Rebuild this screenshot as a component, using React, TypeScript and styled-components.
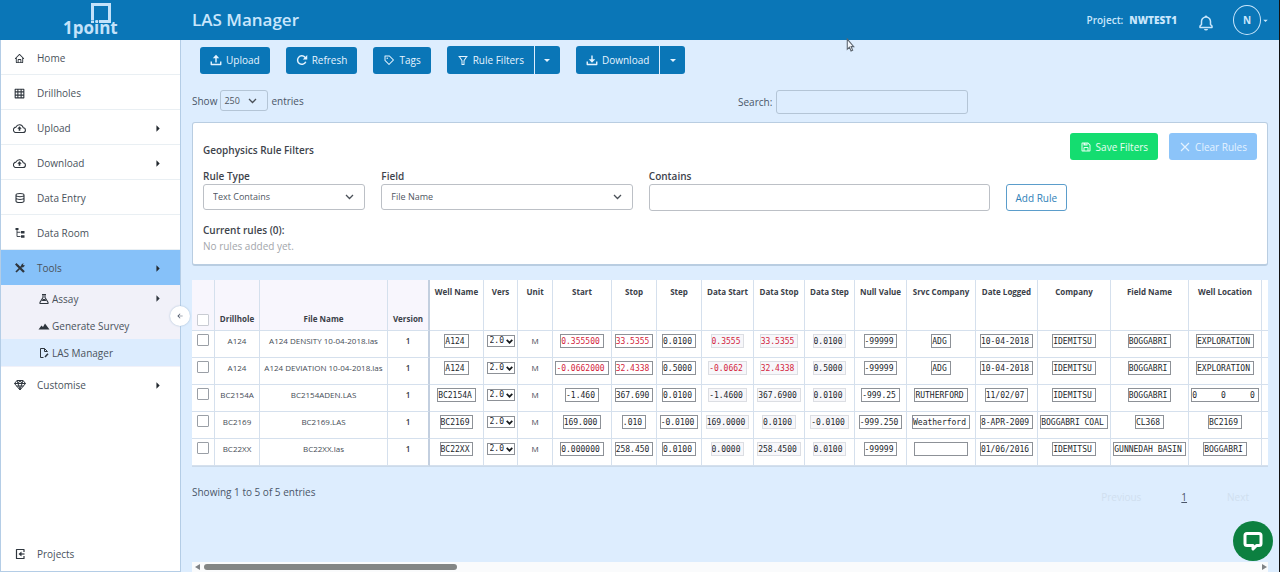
import React from "react";
import styled, { createGlobalStyle, css } from "styled-components";
import { RiGridLine, RiFilterLine, RiArrowLeftLine, RiArrowRightSFill, RiArrowDownSFill } from "react-icons/ri";
import { BiHome, BiBell, BiSave, BiPurchaseTag } from "react-icons/bi";

const SANS = `"Open Sans", "Noto Sans", sans-serif`;
const MONO = `"DejaVu Sans Mono", monospace`;
const BLUE = "#0a76b7";

const GlobalStyle = createGlobalStyle`
  *, *::before, *::after { box-sizing: border-box; }
  body {
    margin: 0;
    background: #ddedfe;
    color: #4a5568;
    font: 10px/16px ${SANS};
  }
  button, input, select { font: inherit; color: inherit; margin: 0; }
  button { cursor: pointer; }
  a { color: inherit; text-decoration: none; }
  h1, h2, p, ul { margin: 0; padding: 0; font-size: inherit; }
  ul { list-style: none; }
`;

const Page = styled.div`
  position: relative;
  display: flex;
  flex-direction: column;
  min-height: 100vh;
  border-right: 1px solid #111;
`;

const Header = styled.header`
  display: flex;
  align-items: center;
  height: 40px;
  background: ${BLUE};
  color: #c9e6fc;
`;

const Brand = styled.a`
  display: flex;
  justify-content: center;
  width: 181px;
`;

const Title = styled.h1`
  flex: 1;
  padding-left: 11px;
  font-size: 17px;
  line-height: 24px;
  font-weight: 600;
`;

const Project = styled.p`
  display: flex;
  gap: 6px;
  font-weight: 600;
`;

const Bell = styled.button`
  display: flex;
  margin: 5px 18px 0 20px;
  padding: 0;
  border: 0;
  background: none;
  font-size: 18px;
`;

const Account = styled.button`
  display: flex;
  align-items: center;
  margin-right: 9px;
  padding: 0;
  border: 0;
  background: none;
  font-weight: 700;
`;

const Avatar = styled.span`
  display: grid;
  place-items: center;
  width: 28px;
  height: 30px;
  border: 1px solid #c9e6fc;
  border-radius: 50%;
`;

const Body = styled.div`
  display: flex;
  flex: 1;
`;

const Sidebar = styled.nav`
  position: relative;
  display: flex;
  flex-direction: column;
  justify-content: space-between;
  width: 181px;
  flex: none;
  background: #fff;
  border: solid #b4cde6;
  border-width: 0 1px 1px;
`;

const NavLink = styled.a<{ $active?: boolean; $plain?: boolean }>`
  display: flex;
  align-items: center;
  height: 35px;
  padding: 2px 16px 0 12px;
  border-bottom: 1px solid ${(p) => (p.$active || p.$plain ? "transparent" : "#e9eff3")};
  background: ${(p) => (p.$active ? "#86c1f9" : "#fff")};
  color: #4a525c;
`;

const NavIcon = styled.span`
  display: grid;
  place-items: center;
  width: 13px;
  margin-right: 11px;
  font-size: 11px;
  color: #2f363e;
`;

const NavLabel = styled.span`
  flex: 1;
`;

const SubMenu = styled.ul`
  padding-bottom: 1px;
  background: #f1f1f9;
`;

const SubLink = styled.a<{ $active?: boolean }>`
  display: flex;
  align-items: center;
  gap: 2px;
  height: 27px;
  padding: 0 16px 0 37px;
  background: ${(p) => (p.$active ? "#dcecfe" : "transparent")};
  color: #4a525c;
  svg { color: #2f363e; }
`;

const Collapse = styled.button`
  position: absolute;
  top: 266px;
  right: -10px;
  display: grid;
  place-items: center;
  width: 20px;
  height: 20px;
  padding: 0;
  border: 0;
  border-radius: 50%;
  background: #fff;
  box-shadow: 0 0 2px #9fb7d0;
  font-size: 8px;
`;

const Main = styled.main`
  flex: 1;
  min-width: 0;
  display: flex;
  flex-direction: column;
  padding: 6px 11px 0 11px;
`;

const Toolbar = styled.div`
  display: flex;
  align-items: center;
  gap: 16px;
  padding-left: 8px;
`;

const Button = styled.button<{ $tone?: "green" | "pale" | "outline" }>`
  display: flex;
  align-items: center;
  justify-content: center;
  gap: 4px;
  height: 27px;
  padding: 0 9px;
  border: 1px solid transparent;
  border-radius: 3px;
  background: ${BLUE};
  color: #e6f4ff;
  font-weight: 500;
  white-space: nowrap;
  svg { font-size: 12px; }
  ${(p) => p.$tone === "green" && css`background: #14dd70; color: #e8fff2;`}
  ${(p) => p.$tone === "pale" && css`background: #8cc4f9; color: #e4f2ff;`}
  ${(p) => p.$tone === "outline" && css`background: #fff; border-color: #5b9dcb; color: #2f7fb8; font-weight: 400;`}
`;

const Split = styled.div`
  display: flex;
  gap: 1px;
  ${Button} { height: 28px; }
  ${Button}:first-child { border-radius: 3px 0 0 3px; }
  ${Button}:last-child { width: 25px; padding: 0; border-radius: 0 3px 3px 0; }
`;

const TableControls = styled.div`
  display: grid;
  grid-template-columns: 1fr 1fr;
  align-items: start;
  margin-top: 16px;
`;

const Control = styled.div<{ $search?: boolean }>`
  display: flex;
  align-items: center;
  gap: ${(p) => (p.$search ? 4 : 3)}px;
  padding-left: ${(p) => (p.$search ? 8 : 0)}px;
`;

const SelectBox = styled.div<{ $small?: boolean }>`
  position: relative;
  display: flex;
  select {
    appearance: none;
    width: ${(p) => (p.$small ? "48px" : "100%")};
    height: ${(p) => (p.$small ? 21 : 26)}px;
    padding: 0 ${(p) => (p.$small ? 3 : 9)}px;
    border: 1px solid ${(p) => (p.$small ? "#b4c5d6" : "#bcc0c6")};
    border-radius: 3px;
    background: transparent;
    font-size: 9px;
    color: #4f565f;
  }
  svg {
    position: absolute;
    top: 50%;
    right: 11px;
    transform: translateY(-50%);
    pointer-events: none;
  }
`;

const TextBox = styled.input<{ $search?: boolean }>`
  width: ${(p) => (p.$search ? "192px" : "100%")};
  height: ${(p) => (p.$search ? 24 : 27)}px;
  padding: 0 8px;
  border: 1px solid ${(p) => (p.$search ? "#b4c5d6" : "#bcc0c6")};
  border-radius: 3px;
  background: transparent;
`;

const Panel = styled.section`
  margin-top: 8px;
  padding: 10px;
  border: 1px solid #b9cde1;
  border-bottom-width: 2px;
  border-radius: 3px;
  background: #fff;
`;

const PanelHead = styled.div`
  display: flex;
  align-items: flex-start;
  gap: 11px;
`;

const PanelTitle = styled.h2`
  flex: 1;
  padding-top: 9px;
  font-weight: 600;
  color: #3d434b;
`;

const RuleGrid = styled.div`
  display: grid;
  grid-template-columns: repeat(12, 1fr);
  column-gap: 16px;
  align-items: start;
  margin-top: 8px;
`;

const Field = styled.div<{ $span: number }>`
  grid-column: span ${(p) => p.$span};
  min-width: 0;
  label {
    display: block;
    font-weight: 600;
    color: #3d434b;
  }
`;

const AddCell = styled.div`
  grid-column: span 3;
  padding-top: 16px;
`;

const RuleNotes = styled.div`
  margin-top: 11px;
`;

const RuleHeading = styled.p`
  font-weight: 600;
  color: #3d434b;
`;

const Muted = styled.p`
  color: #a3a6ab;
`;

const TableFrame = styled.div`
  margin-top: 14px;
  overflow: hidden;
  border-bottom: 1px solid #cbdaea;
`;

const Grid = styled.table`
  width: 1146px;
  table-layout: fixed;
  border-collapse: separate;
  border-spacing: 0;
  background: #fff;
  font-size: 8px;
  line-height: 14px;
  text-align: center;
`;

const cellLine = css<{ $edge?: boolean }>`
  border-right: ${(p) => (p.$edge ? "2px solid #c3cfdf" : "1px solid #d5e0ed")};
`;

const HeadCell = styled.th<{ $fixed?: boolean; $edge?: boolean }>`
  ${cellLine}
  height: 51px;
  padding: ${(p) => (p.$fixed ? "0 0 4px" : "5px 0 0")};
  border-bottom: 1px solid #d5e0ed;
  background: ${(p) => (p.$fixed ? "#f8f6fd" : "#fff")};
  vertical-align: ${(p) => (p.$fixed ? "bottom" : "top")};
  font-weight: 700;
  color: #3a4048;
  white-space: nowrap;
`;

const Cell = styled.td<{ $edge?: boolean; $strong?: boolean }>`
  ${cellLine}
  height: 27px;
  padding: 3px 0 0;
  border-bottom: 1px solid #d5e0ed;
  vertical-align: top;
  white-space: nowrap;
  color: #454c55;
  ${(p) => p.$strong && css`font-weight: 600; color: #2f353c;`}
`;

const Check = styled.input`
  appearance: none;
  display: block;
  width: 12px;
  height: 12px;
  margin: 0 auto;
  border: 1px solid #9a9fa6;
  border-radius: 1px;
  background: #fff;
  th & { border-color: #c9ccd3; }
`;

const ValueBox = styled.input<{ $chars: number; $bad?: boolean }>`
  display: block;
  width: calc(${(p) => p.$chars}ch + 5px);
  height: 14px;
  margin: 0 auto;
  padding: 0;
  border: 1px solid #8d9197;
  border-radius: 0;
  background: #fff;
  font: 8px/12px ${MONO};
  color: ${(p) => (p.$bad ? "#d3243c" : "#23272c")};
  &:read-only {
    border-color: #dcdee3;
    background: #f7f7fa;
  }
`;

const VersionBox = styled.div`
  position: relative;
  width: 28px;
  margin: 1px auto 0;
  select {
    appearance: none;
    display: block;
    width: 100%;
    height: 12px;
    padding: 0 2px;
    border: 1px solid #8d9197;
    border-radius: 0;
    background: #fff;
    font: 8px/10px ${MONO};
    color: #23272c;
  }
  svg {
    position: absolute;
    top: 4px;
    right: 2px;
    pointer-events: none;
  }
`;

const Footer = styled.div`
  display: flex;
  justify-content: space-between;
  padding: 17px 19px 0 0;
`;

const Pager = styled.nav`
  display: flex;
  align-items: center;
  gap: 40px;
  margin-top: 5px;
  button {
    padding: 0;
    border: 0;
    background: none;
    color: #d0dfef;
  }
  a { text-decoration: underline; }
`;

const ScrollBar = styled.div`
  display: flex;
  align-items: center;
  justify-content: space-between;
  height: 10px;
  margin-top: auto;
  padding: 0 1px 0 3px;
  background: #fafbfc;
  color: #808386;
`;

const ScrollTrack = styled.div`
  flex: 1;
  padding: 0 4px;
`;

const ScrollThumb = styled.div`
  width: 24%;
  height: 6px;
  border-radius: 3px;
  background: #838685;
`;

const Chat = styled.button`
  position: absolute;
  right: 6px;
  bottom: 11px;
  display: grid;
  place-items: center;
  width: 40px;
  height: 40px;
  padding: 0;
  border: 0;
  border-radius: 50%;
  background: #0c8040;
`;

const Pointer = styled.svg`
  position: absolute;
  left: 846px;
  top: 38px;
`;

const LogoText = styled.text`
  font: 700 17px ${SANS};
`;

const Logo = () => (
  <svg width="60" height="38" viewBox="0 0 60 38" role="img" aria-label="1point" fill="#c3e2fa">
    <path d="M30 2h20v20H38v-3h9V5H33v14h-3z" />
    <path d="M30 19.500h3v2.500h-3zM34.500 19.500h2.500v2.500h-2.500z" />
    <LogoText x="2" y="33">1point</LogoText>
  </svg>
);

const Chevron = () => (
  <svg width="9" height="6" viewBox="0 0 9 6" fill="none" stroke="#4a5058" strokeWidth="1.3" aria-hidden>
    <path d="M1 1l3.500 3.500L8 1" />
  </svg>
);

const Glyph = ({ width = 12, children }: { width?: number; children: React.ReactNode }) => (
  <svg
    width={width}
    height={width}
    viewBox="0 0 24 24"
    fill="none"
    stroke="currentColor"
    strokeWidth="2.400"
    strokeLinejoin="round"
    aria-hidden
  >
    {children}
  </svg>
);

const Cloud = () => (
  <Glyph width={13}>
    <path d="M6 19.500h12a4.500 4.500 0 0 0 .8-9A7 7 0 0 0 5.500 9.500a5 5 0 0 0 .5 10z" strokeWidth="2" />
    <path d="M12 8l4 4.500h-2.500V16h-3v-3.500H8z" fill="currentColor" stroke="none" />
  </Glyph>
);

const Cylinder = () => (
  <Glyph>
    <path d="M4 6q0-3 8-3t8 3v12q0 3-8 3t-8-3zM4 7q2 2.500 8 2.500T20 7M4 12.500q2 2.500 8 2.500t8-2.500" strokeWidth="2.200" />
  </Glyph>
);

const CrossedTools = () => (
  <Glyph>
    <path d="M7 7l13 13" strokeWidth="4.500" />
    <path d="M17 7L4 20" strokeWidth="3.500" />
    <path d="M2 5l3-3 5 5-3 3zM15 5l4-3-1 4 4 1-4 4-4-1z" fill="currentColor" stroke="none" />
  </Glyph>
);

const FolderTree = () => (
  <Glyph>
    <path d="M6 4v15h7M6 10.500h7" strokeWidth="1.800" />
    <path d="M3 2h6v4H3zM14 8h7v5h-7zM14 16.500h7v5h-7z" fill="currentColor" stroke="none" />
  </Glyph>
);

const Flask = () => (
  <Glyph>
    <path d="M8 3h8M10 3v6L4 18.500V21h16v-2.500L14 9V3" strokeWidth="2.200" />
    <path d="M9.500 12h5l2 4h-9z" fill="currentColor" stroke="none" />
  </Glyph>
);

const Mountains = () => (
  <Glyph>
    <path d="M1 19l6-8 3 3 4-7 9 12z" fill="currentColor" stroke="none" />
  </Glyph>
);

const FilePen = () => (
  <Glyph>
    <path d="M11 21H5V3h8l6 6M13 3v6h6" strokeWidth="2" />
    <path d="M14 20l6-6.500" strokeWidth="3" />
  </Glyph>
);

const Exit = () => (
  <Glyph>
    <path d="M20 8V3H5v18h15v-5" />
    <path d="M21 12h-8" />
    <path d="M15 7v10l-6-5z" fill="currentColor" stroke="none" />
  </Glyph>
);

const Gem = () => (
  <Glyph>
    <path d="M6 3h12l5 6-11 13L1 9zM1 9h22M8 9l4 12 4-12M6 3l2 6 4-6 4 6 2-6M5 14h14" strokeWidth="2" />
  </Glyph>
);

const TrayUp = () => (
  <Glyph>
    <path d="M2.500 15v6h19v-6M12 17V6" strokeWidth="2.800" />
    <path d="M12 1.500l6.500 7h-13z" fill="currentColor" stroke="none" />
  </Glyph>
);

const TrayDown = () => (
  <Glyph>
    <path d="M2.500 15v6h19v-6M12 3v9" strokeWidth="2.800" />
    <path d="M12 17.500l6.500-7h-13z" fill="currentColor" stroke="none" />
  </Glyph>
);

const Reload = () => (
  <Glyph>
    <path d="M19.500 15.500A8.500 8.500 0 1 1 18 6.500l2 2" strokeWidth="3" />
    <path d="M22.500 2v9h-9z" fill="currentColor" stroke="none" />
  </Glyph>
);

const Cross = () => (
  <Glyph>
    <path d="M4 4l16 16M20 4L4 20" />
  </Glyph>
);

type NavItem = { label: string; icon: React.ReactNode; more?: boolean; active?: boolean };

const topNav: NavItem[] = [
  { label: "Home", icon: <BiHome /> },
  { label: "Drillholes", icon: <RiGridLine size={13} /> },
  { label: "Upload", icon: <Cloud />, more: true },
  { label: "Download", icon: <Cloud />, more: true },
  { label: "Data Entry", icon: <Cylinder /> },
  { label: "Data Room", icon: <FolderTree /> },
  { label: "Tools", icon: <CrossedTools />, more: true, active: true },
];

const subNav: NavItem[] = [
  { label: "Assay", icon: <Flask />, more: true },
  { label: "Generate Survey", icon: <Mountains /> },
  { label: "LAS Manager", icon: <FilePen />, active: true },
];

const NavRow = ({ item, plain }: { item: NavItem; plain?: boolean }) => (
  <NavLink href="#" $active={item.active} $plain={plain}>
    <NavIcon>{item.icon}</NavIcon>
    <NavLabel>{item.label}</NavLabel>
    {item.more && <RiArrowRightSFill size={13} color="#22282e" />}
  </NavLink>
);

type Column = { title: string; width: number; kind?: "version" | "unit" | "locked" };

const columns: Column[] = [
  { title: "Well Name", width: 54 },
  { title: "Vers", width: 34, kind: "version" },
  { title: "Unit", width: 35, kind: "unit" },
  { title: "Start", width: 59 },
  { title: "Stop", width: 45 },
  { title: "Step", width: 45 },
  { title: "Data Start", width: 52, kind: "locked" },
  { title: "Data Stop", width: 51, kind: "locked" },
  { title: "Data Step", width: 50, kind: "locked" },
  { title: "Null Value", width: 52 },
  { title: "Srvc Company", width: 69 },
  { title: "Date Logged", width: 62 },
  { title: "Company", width: 73 },
  { title: "Field Name", width: 78 },
  { title: "Well Location", width: 73 },
];

type Row = { hole: string; file: string; values: string[]; bad?: boolean };

const rows: Row[] = [
  {
    hole: "A124",
    file: "A124 DENSITY 10-04-2018.las",
    bad: true,
    values: ["A124", "2.0", "M", "0.355500", "33.5355", "0.0100", "0.3555", "33.5355", "0.0100", "-99999", "ADG", "10-04-2018", "IDEMITSU", "BOGGABRI", "EXPLORATION"],
  },
  {
    hole: "A124",
    file: "A124 DEVIATION 10-04-2018.las",
    bad: true,
    values: ["A124", "2.0", "M", "-0.0662000", "32.4338", "0.5000", "-0.0662", "32.4338", "0.5000", "-99999", "ADG", "10-04-2018", "IDEMITSU", "BOGGABRI", "EXPLORATION"],
  },
  {
    hole: "BC2154A",
    file: "BC2154ADEN.LAS",
    values: ["BC2154A", "2.0", "M", "-1.460", "367.690", "0.0100", "-1.4600", "367.6900", "0.0100", "-999.25", "RUTHERFORD", "11/02/07", "IDEMITSU", "BOGGABRI", "0     0     0"],
  },
  {
    hole: "BC2169",
    file: "BC2169.LAS",
    values: ["BC2169", "2.0", "M", "169.000", ".010", "-0.0100", "169.0000", "0.0100", "-0.0100", "-999.250", "Weatherford", "8-APR-2009", "BOGGABRI COAL", "CL368", "BC2169"],
  },
  {
    hole: "BC22XX",
    file: "BC22XX.las",
    values: ["BC22XX", "2.0", "M", "0.000000", "258.450", "0.0100", "0.0000", "258.4500", "0.0100", "-99999", "", "01/06/2016", "IDEMITSU", "GUNNEDAH BASIN", "BOGGABRI"],
  },
];

const flaggedColumns = ["Start", "Stop", "Data Start", "Data Stop"];

const ValueCell = ({ column, value, row }: { column: Column; value: string; row: Row }) => {
  if (column.kind === "unit") return <Cell>{value}</Cell>;
  if (column.kind === "version")
    return (
      <Cell>
        <VersionBox>
          <select aria-label={`Version of ${row.file}`} defaultValue={value}>
            <option>{value}</option>
          </select>
          <svg width="7" height="5" viewBox="0 0 7 5" fill="none" stroke="#16191c" strokeWidth="1.7" aria-hidden>
            <path d="M.7.9l2.8 2.8L6.3.9" />
          </svg>
        </VersionBox>
      </Cell>
    );
  return (
    <Cell>
      <ValueBox
        aria-label={`${column.title} of ${row.file}`}
        defaultValue={value}
        readOnly={column.kind === "locked"}
        $chars={value.length || 10}
        $bad={row.bad && flaggedColumns.includes(column.title)}
      />
    </Cell>
  );
};

export default function App() {
  return (
    <>
      <GlobalStyle />
      <Page>
        <Header>
          <Brand href="#"><Logo /></Brand>
          <Title>LAS Manager</Title>
          <Project>Project: <strong>NWTEST1</strong></Project>
          <Bell aria-label="Notifications"><BiBell /></Bell>
          <Account aria-label="Account">
            <Avatar>N</Avatar>
            <RiArrowDownSFill size={9} />
          </Account>
        </Header>
        <Body>
          <Sidebar>
            <div>
              {topNav.map((item) => <NavRow key={item.label} item={item} />)}
              <SubMenu>
                {subNav.map((item) => (
                  <li key={item.label}>
                    <SubLink href="#" $active={item.active}>
                      {item.icon}
                      <NavLabel>{item.label}</NavLabel>
                      {item.more && <RiArrowRightSFill size={13} />}
                    </SubLink>
                  </li>
                ))}
              </SubMenu>
              <NavRow item={{ label: "Customise", icon: <Gem />, more: true }} plain />
            </div>
            <NavRow item={{ label: "Projects", icon: <Exit /> }} plain />
            <Collapse aria-label="Collapse menu"><RiArrowLeftLine /></Collapse>
          </Sidebar>
          <Main>
            <Toolbar>
              <Button><TrayUp />Upload</Button>
              <Button><Reload />Refresh</Button>
              <Button><BiPurchaseTag />Tags</Button>
              <Split>
                <Button><RiFilterLine />Rule Filters</Button>
                <Button aria-label="More rule filters"><RiArrowDownSFill /></Button>
              </Split>
              <Split>
                <Button><TrayDown />Download</Button>
                <Button aria-label="More downloads"><RiArrowDownSFill /></Button>
              </Split>
            </Toolbar>
            <TableControls>
              <Control>
                <label htmlFor="page-size">Show</label>
                <SelectBox $small>
                  <select id="page-size" defaultValue="250"><option>250</option></select>
                  <Chevron />
                </SelectBox>
                <span>entries</span>
              </Control>
              <Control $search>
                <label htmlFor="search">Search:</label>
                <TextBox id="search" type="search" $search />
              </Control>
            </TableControls>
            <Panel>
              <PanelHead>
                <PanelTitle>Geophysics Rule Filters</PanelTitle>
                <Button $tone="green"><BiSave />Save Filters</Button>
                <Button $tone="pale"><Cross />Clear Rules</Button>
              </PanelHead>
              <RuleGrid>
                <Field $span={2}>
                  <label htmlFor="rule-type">Rule Type</label>
                  <SelectBox>
                    <select id="rule-type"><option>Text Contains</option></select>
                    <Chevron />
                  </SelectBox>
                </Field>
                <Field $span={3}>
                  <label htmlFor="field">Field</label>
                  <SelectBox>
                    <select id="field"><option>File Name</option></select>
                    <Chevron />
                  </SelectBox>
                </Field>
                <Field $span={4}>
                  <label htmlFor="contains">Contains</label>
                  <TextBox id="contains" />
                </Field>
                <AddCell><Button $tone="outline">Add Rule</Button></AddCell>
              </RuleGrid>
              <RuleNotes>
                <RuleHeading>Current rules (0):</RuleHeading>
                <Muted>No rules added yet.</Muted>
              </RuleNotes>
            </Panel>
            <TableFrame>
              <Grid>
                <colgroup>
                  <col width={23} />
                  <col width={45} />
                  <col width={128} />
                  <col width={42} />
                  {columns.map((c) => <col key={c.title} width={c.width} />)}
                  <col width={76} />
                </colgroup>
                <thead>
                  <tr>
                    <HeadCell $fixed><Check type="checkbox" aria-label="Select all" /></HeadCell>
                    <HeadCell $fixed>Drillhole</HeadCell>
                    <HeadCell $fixed>File Name</HeadCell>
                    <HeadCell $fixed $edge>Version</HeadCell>
                    {columns.map((c) => <HeadCell key={c.title}>{c.title}</HeadCell>)}
                    <HeadCell />
                  </tr>
                </thead>
                <tbody>
                  {rows.map((row) => (
                    <tr key={row.file}>
                      <Cell><Check type="checkbox" aria-label={`Select ${row.file}`} /></Cell>
                      <Cell>{row.hole}</Cell>
                      <Cell>{row.file}</Cell>
                      <Cell $edge $strong>1</Cell>
                      {columns.map((c, i) => (
                        <ValueCell key={c.title} column={c} value={row.values[i]} row={row} />
                      ))}
                      <Cell />
                    </tr>
                  ))}
                </tbody>
              </Grid>
            </TableFrame>
            <Footer>
              <p>Showing 1 to 5 of 5 entries</p>
              <Pager aria-label="Pages">
                <button disabled>Previous</button>
                <a href="#">1</a>
                <button disabled>Next</button>
              </Pager>
            </Footer>
            <ScrollBar aria-hidden>
              <svg width="5" height="6" viewBox="0 0 5 6" fill="currentColor"><path d="M5 0v6L0 3z" /></svg>
              <ScrollTrack><ScrollThumb /></ScrollTrack>
              <svg width="5" height="6" viewBox="0 0 5 6" fill="currentColor"><path d="M0 0v6l5-3z" /></svg>
            </ScrollBar>
          </Main>
        </Body>
        <Chat aria-label="Open chat">
          <svg width="22" height="22" viewBox="0 0 22 22" fill="none" stroke="#fff" strokeWidth="3" strokeLinejoin="round" aria-hidden>
            <path d="M5 3.500h12q2 0 2 2v8q0 2-2 2h-2.500L11 19v-3.500H5q-2 0-2-2v-8q0-2 2-2z" />
          </svg>
        </Chat>
        <Pointer width="9" height="14" viewBox="0 0 8 13" fill="#f4f8fc" stroke="#5d6670" strokeWidth="1" aria-hidden>
          <path d="M1 1v9.500l2-2 1.500 3.500 1.500-.7L4.600 8H7z" />
        </Pointer>
      </Page>
    </>
  );
}
